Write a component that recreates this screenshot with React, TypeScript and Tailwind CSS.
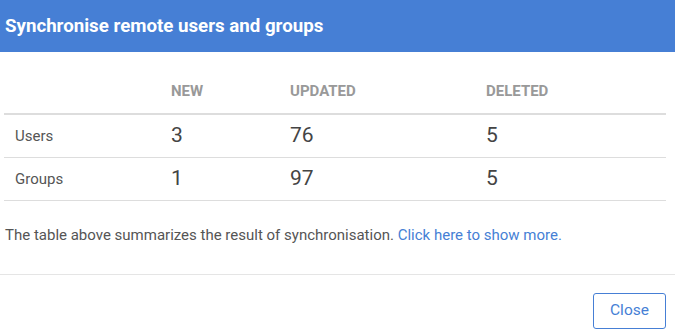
import React from "react";

const rows = [
  { label: "Users", n: "3", u: "76", d: "5" },
  { label: "Groups", n: "1", u: "97", d: "5" },
];

export default function App() {
  return (
    <div className="w-[675px] h-[333px] bg-white overflow-hidden" style={{ fontFamily: "Roboto, 'Liberation Sans', sans-serif" }}>
      <div className="h-[52px] bg-[#467fd5] flex items-center px-[5px]">
        <h1 className="text-white text-[18.7px] font-bold">Synchronise remote users and groups</h1>
      </div>
      <div className="pl-[4px] pr-[9px]">
        <div className="grid grid-cols-[156px_119px_196px_1fr] h-[63px] items-end border-b-2 border-[#dddddd] pb-[11px]">
          <div />
          <div className="pl-[11px] text-[15px] font-bold text-[#999999]">NEW</div>
          <div className="pl-[11px] text-[15px] font-bold text-[#999999]">UPDATED</div>
          <div className="pl-[11px] text-[15px] font-bold text-[#999999]">DELETED</div>
        </div>
        {rows.map((r) => (
          <div key={r.label} className="grid grid-cols-[156px_119px_196px_1fr] h-[43px] items-center border-b border-[#dddddd]">
            <div className="pl-[11px] text-[15px] text-[#555555]">{r.label}</div>
            <div className="pl-[11px] text-[21px] text-[#444444]">{r.n}</div>
            <div className="pl-[11px] text-[21px] text-[#444444]">{r.u}</div>
            <div className="pl-[11px] text-[21px] text-[#444444]">{r.d}</div>
          </div>
        ))}
      </div>
      <p className="px-[5px] h-[73px] flex items-center pb-[4px] text-[15px] text-[#555555]">
        <span>
          The table above summarizes the result of synchronisation.{" "}
          <a className="text-[#467fd5]">Click here to show more.</a>
        </span>
      </p>
      <div className="border-t border-[#e5e5e5] flex justify-end pt-[18px] pr-[9px]">
        <button className="w-[73px] h-[36px] border border-[#467fd5] rounded-[3px] text-[#467fd5] text-[15.5px]">Close</button>
      </div>
    </div>
  );
}
